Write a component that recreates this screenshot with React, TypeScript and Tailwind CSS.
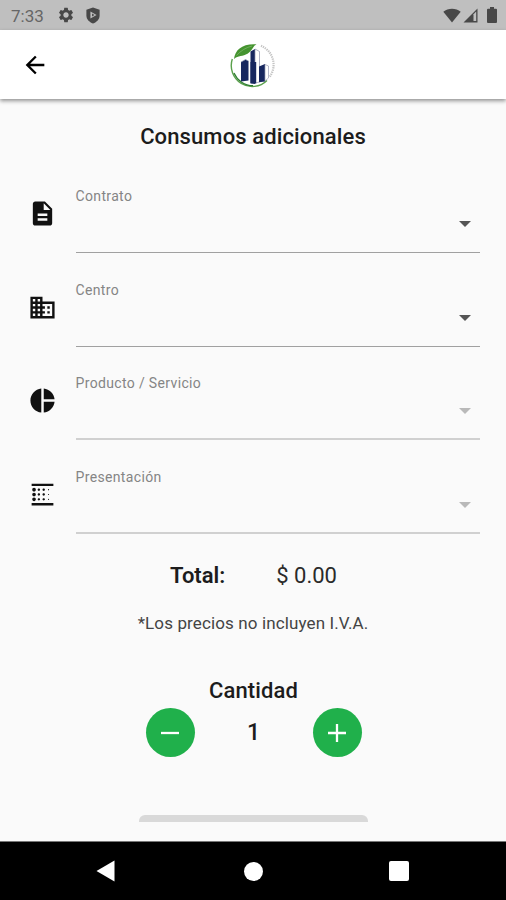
import { useState } from "react";
import type { IconType } from "react-icons";
import {
  MdArrowBack,
  MdBlurLinear,
  MdBusiness,
  MdDescription,
  MdPieChart,
  MdSettings,
} from "react-icons/md";

interface Field {
  label: string;
  icon: IconType;
  enabled: boolean;
}

const FIELDS: Field[] = [
  { label: "Contrato", icon: MdDescription, enabled: true },
  { label: "Centro", icon: MdBusiness, enabled: true },
  { label: "Producto / Servicio", icon: MdPieChart, enabled: false },
  { label: "Presentación", icon: MdBlurLinear, enabled: false },
];

function StatusBar() {
  return (
    <div className="flex h-[30px] shrink-0 items-center bg-[#bfbfbf] pr-[9px] pl-[11px] text-[#484848]">
      <span className="w-[46px] pt-[2px] text-[17px] leading-none text-[#666]">
        7:33
      </span>
      <MdSettings className="size-[18px]" />
      <svg viewBox="0 0 16 18" className="ml-[10px] h-[17px] w-[16px]">
        <path
          d="M8 .5 15 3v6c0 4-3 7-7 8.500C4 16 1 13 1 9V3Z"
          fill="currentColor"
        />
        <path d="M5.300 4.800v7.400L11.800 8.500Z" fill="#bfbfbf" />
        <path d="M7 7v3l2.600-1.500Z" fill="currentColor" />
      </svg>
      <svg viewBox="0 0 18 15" className="ml-auto h-[15px] w-[18px]">
        <path d="M9 14.500.3 3.800C5-.4 13-.4 17.700 3.800Z" fill="currentColor" />
      </svg>
      <svg viewBox="0 0 15 15" className="ml-[2px] h-[15px] w-[15px]">
        <path d="M14.500.5V14.500H.5Z" fill="currentColor" />
        <path d="M10.500 6.300 13.200 3.600V13H10.500Z" fill="#bfbfbf" />
      </svg>
      <svg viewBox="0 0 10 16" className="ml-[9px] h-[16px] w-[10px]">
        <path
          d="M3 0h4v1.700h2q1 0 1 1V15q0 1-1 1H1q-1 0-1-1V2.700q0-1 1-1h2Z"
          fill="currentColor"
        />
      </svg>
    </div>
  );
}

function Logo() {
  return (
    <svg viewBox="0 0 46 46" className="size-[46px]">
      {/* Ring */}
      <path
        d="M2.300 17A21 21 0 0 0 37 38.500"
        fill="none"
        stroke="#5aa04c"
        strokeWidth="1.400"
      />
      <path
        d="M4 31A21 21 0 0 0 23 43.700"
        fill="none"
        stroke="#2f7d32"
        strokeWidth="1.200"
      />
      <path
        d="M31 3.800A20.500 20.500 0 0 1 39.500 35"
        fill="none"
        stroke="#c4c4c4"
        strokeWidth="2.200"
        strokeDasharray="1.300 .9"
      />
      {/* Leaf */}
      <path
        d="M4 17C5 8 12 1.500 26.500 2.300 23 4 22.500 8.500 17.500 11.800 13 14.500 8 13.500 4 17Z"
        fill="#459430"
      />
      <path d="M6.500 13.500C11 8.500 16 5.500 22 4" fill="none" stroke="#8cc178" strokeWidth=".6" />
      {/* Towers */}
      <path d="M11 20l4.500-2.500 3 1.500V38.500L11 39.500Z" fill="#17275f" />
      <path d="M11 20l4.500-2.500 3 1.500" fill="none" stroke="#9aa0b8" strokeWidth=".7" />
      <path d="M20.500 9.500 25 7v35l-4.500-1Z" fill="#17275f" />
      <path d="M25 7l4.500 2.500V40l-4.500 1Z" fill="#fff" stroke="#8c91ac" strokeWidth=".7" />
      <path d="M20.500 20h5.700v21.500h-5.700Z" fill="#17275f" />
      <path d="M29 24.500l6-2.500v17.500l-6 .8Z" fill="#17275f" />
      <path d="M35 22.500l3.500 1.500v12L35 39Z" fill="#fff" stroke="#9a9eb4" strokeWidth=".7" />
    </svg>
  );
}

function Header() {
  return (
    <header className="relative flex h-[69px] shrink-0 items-center justify-center bg-white shadow-[0_2px_4px_rgba(0,0,0,0.42)]">
      <button className="absolute left-[21px]" aria-label="Atrás">
        <MdArrowBack className="size-[28px] text-black" />
      </button>
      <Logo />
    </header>
  );
}

function SelectField({ label, icon: Icon, enabled }: Field) {
  return (
    <div className="flex h-[93.500px]">
      <Icon className="mt-[19px] size-[29px] shrink-0 text-[#111]" />
      <div
        className={`ml-[18.500px] flex h-[73px] flex-1 flex-col ${
          enabled ? "border-b border-[#a0a0a0]" : "border-b-2 border-[#d0d0d0]"
        }`}
      >
        <span className="pt-[8px] text-[14px] leading-[16px] tracking-[0.35px] text-[#858585]">
          {label}
        </span>
        <svg
          viewBox="0 0 12 6"
          className={`mt-[17px] mr-[9px] h-[6px] w-[12px] self-end ${
            enabled ? "text-[#555]" : "text-[#b9b9b9]"
          }`}
        >
          <path d="M0 0h12L6 6Z" fill="currentColor" />
        </svg>
      </div>
    </div>
  );
}

function NavBar() {
  return (
    <nav className="flex h-[59px] shrink-0 items-center justify-between border-t border-[#777] bg-black pr-[97px] pl-[96px] text-white">
      <svg viewBox="0 0 19 22" className="h-[22px] w-[19px]">
        <path d="M18.500.5v21L.5 11Z" fill="currentColor" />
      </svg>
      <span className="ml-[2px] size-[19px] rounded-full bg-white" />
      <span className="size-[20px] rounded-[2px] bg-white" />
    </nav>
  );
}

export default function App() {
  const [quantity, setQuantity] = useState(1);

  return (
    <div className="flex h-[900px] w-[506px] flex-col overflow-hidden bg-[#fafafa] font-[Roboto,sans-serif] text-[#1c1c1c]">
      <StatusBar />
      <Header />

      <main className="flex min-h-0 flex-1 flex-col overflow-hidden">
        <h1 className="mt-[24px] text-center text-[22px] leading-[28px] font-medium tracking-[0.120px]">
          Consumos adicionales
        </h1>

        <div className="mt-[29px] pr-[26px] pl-[28px]">
          {FIELDS.map((field) => (
            <SelectField key={field.label} {...field} />
          ))}
        </div>

        {/* Total */}
        <div className="mt-[8px] flex items-center justify-center gap-[51px] pl-[1px] text-[22px] leading-[28px]">
          <span className="font-semibold">Total:</span>
          <span className="text-[#2a2a2a]">$ 0.00</span>
        </div>
        <p className="mt-[21px] text-center text-[17px] leading-[24px] tracking-[0.120px] text-[#444]">
          *Los precios no incluyen I.V.A.
        </p>

        {/* Quantity */}
        <h2 className="mt-[42px] pl-[1px] text-center text-[22px] leading-[28px] font-medium tracking-[0.100px]">
          Cantidad
        </h2>
        <div className="mt-[3px] flex items-center justify-center pl-[1px]">
          <button
            className="flex size-[49px] items-center justify-center rounded-full bg-[#20b04b]"
            onClick={() => setQuantity(Math.max(1, quantity - 1))}
            aria-label="Menos"
          >
            <svg viewBox="0 0 20 20" className="size-[20px]">
              <path d="M1 10h18" stroke="#fff" strokeWidth="2.300" />
            </svg>
          </button>
          <span className="w-[118px] pt-[2px] text-center text-[23px] font-medium">
            {quantity}
          </span>
          <button
            className="flex size-[49px] items-center justify-center rounded-full bg-[#20b04b]"
            onClick={() => setQuantity(quantity + 1)}
            aria-label="Más"
          >
            <svg viewBox="0 0 20 20" className="size-[20px]">
              <path d="M1 10h18M10 1v18" stroke="#fff" strokeWidth="2.300" />
            </svg>
          </button>
        </div>

        {/* Submit button, cut off by the end of the list */}
        <div className="mx-auto mt-[58px] h-[7px] w-[229px] shrink-0 rounded-t-[6px] bg-[#d9d9d9]" />
      </main>

      <NavBar />
    </div>
  );
}
